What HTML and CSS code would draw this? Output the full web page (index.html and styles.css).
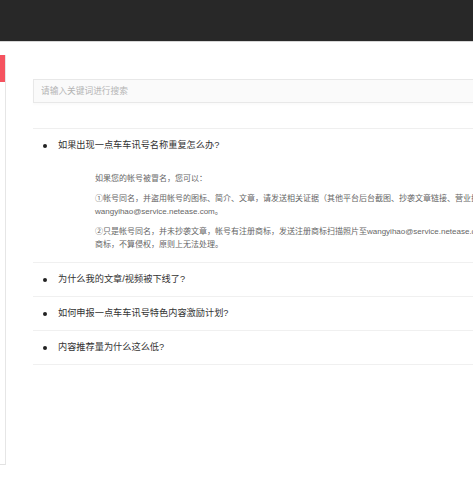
FILE: index.html
```html
<!DOCTYPE html>
<html lang="zh-CN">
<head>
<meta charset="utf-8">
<title>常见问题</title>
<link rel="stylesheet" href="styles.css">
</head>
<body>
<header class="topbar"></header>
<div class="layout">
  <aside class="sidebar">
    <div class="sidebar-active"></div>
  </aside>
  <main class="main">
    <div class="search">
      <input class="search-input" type="text" placeholder="请输入关键词进行搜索">
    </div>
    <ul class="faq-list">
      <li class="faq-item">
        <div class="faq-q">如果出现一点车车讯号名称重复怎么办?</div>
        <div class="faq-a">
          <p>如果您的帐号被冒名，您可以：</p>
          <p>①帐号同名，并盗用帐号的图标、简介、文章，请发送相关证据（其他平台后台截图、抄袭文章链接、营业执照等）至wangyihao@service.netease.com。</p>
          <p>②只是帐号同名，并未抄袭文章，帐号有注册商标，发送注册商标扫描照片至wangyihao@service.netease.com；若无注册商标，不算侵权，原则上无法处理。</p>
        </div>
      </li>
      <li class="faq-item">
        <div class="faq-q">为什么我的文章/视频被下线了?</div>
      </li>
      <li class="faq-item">
        <div class="faq-q">如何申报一点车车讯号特色内容激励计划?</div>
      </li>
      <li class="faq-item">
        <div class="faq-q">内容推荐量为什么这么低?</div>
      </li>
    </ul>
  </main>
</div>
</body>
</html>
```

FILE: styles.css
```css
html, body {
  margin: 0;
  padding: 0;
  overflow: hidden;
  background: #fff;
}

body {
  font-family: "Liberation Sans", "Noto Sans CJK SC", sans-serif;
  color: #333;
  width: 473px;
  height: 477px;
}

.topbar {
  height: 41px;
  background: #282828;
  border-bottom: 1px solid #d6d6d6;
}

.layout {
  display: flex;
  align-items: flex-start;
}

.sidebar {
  flex: 0 0 5px;
  margin-top: 13px;
  height: 409px;
  background: #fff;
  border-right: 1px solid #e6e6e6;
  border-bottom: 1px solid #e2e2e2;
}

.sidebar-active {
  height: 27px;
  background: #f5535f;
}

.main {
  flex: 0 0 600px;
  margin-left: 27px;
  padding-top: 37px;
}

.search {
  height: 24px;
  box-shadow: 0 2px 2px rgba(0, 0, 0, 0.02);
}

.search-input {
  box-sizing: border-box;
  display: block;
  width: 100%;
  height: 24px;
  margin: 0;
  padding: 0 7px;
  border: 1px solid #e8e8e8;
  background: #fafafa;
  font-family: inherit;
  font-size: 8.7px;
  color: #333;
  outline: none;
}

.search-input::placeholder {
  color: #b4b4b4;
}

.faq-list {
  list-style: none;
  margin: 25px 0 0;
  padding: 0;
  border-top: 1px solid #efefef;
}

.faq-item {
  border-bottom: 1px solid #f0f0f0;
}

.faq-q {
  position: relative;
  padding: 9px 0 10px 25px;
  font-size: 9.2px;
  line-height: 14px;
  color: #333;
}

.faq-q::before {
  content: "";
  position: absolute;
  left: 10px;
  top: 15px;
  width: 4px;
  height: 4px;
  border-radius: 50%;
  background: #222;
}

.faq-a {
  width: 434px;
  margin: 10px 0 0 62px;
  padding-bottom: 11px;
  font-size: 8px;
  line-height: 13px;
  color: #666;
}

.faq-a p {
  margin: 0 0 7px;
}

.faq-a p:last-child {
  margin-bottom: 0;
}
```
